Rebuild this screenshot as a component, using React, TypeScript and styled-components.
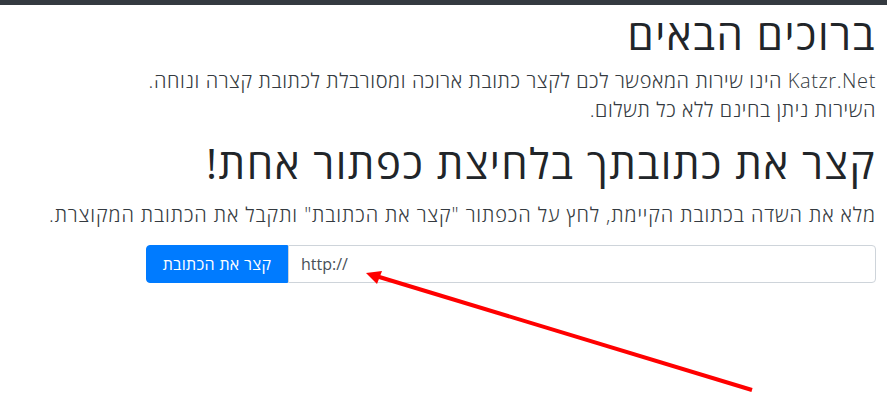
import { createGlobalStyle } from "styled-components"
import styled from "styled-components"

const GlobalStyle = createGlobalStyle`
  html, body {
    margin: 0;
    padding: 0;
    background: #fff;
  }
  body {
    font-family: "Open Sans", "DejaVu Sans", sans-serif;
    color: #212529;
  }
`

const Page = styled.div`
  position: relative;
  direction: rtl;
  min-height: 412px;
`

const TopBar = styled.div`
  height: 5px;
  background-color: #343a40;
`

const Container = styled.main`
  padding: 0 11px 0 0;
`

const Title = styled.h1<{ $top: number; $bottom: number }>`
  font-size: 42px;
  font-weight: 500;
  line-height: 1.2;
  letter-spacing: 1.5px;
  margin: ${(p) => p.$top}px 0 ${(p) => p.$bottom}px;
`

const Lead = styled.p<{ $wide?: boolean }>`
  font-size: 20px;
  font-weight: 300;
  line-height: 29px;
  letter-spacing: ${(p) => (p.$wide ? 0.9 : 0.6)}px;
  margin: 0;
  color: #343a40;
`

const InputGroup = styled.form`
  display: flex;
  width: calc(100% * 10 / 12);
  height: 38px;
  margin-top: 16px;
`

const UrlInput = styled.input`
  flex: 1;
  min-width: 0;
  direction: ltr;
  text-align: left;
  font-family: inherit;
  font-size: 16px;
  color: #495057;
  padding: 6px 12px;
  border: 1px solid #ced4da;
  border-radius: 0 4px 4px 0;
  background: #fff;

  &:focus {
    outline: none;
    border-color: #80bdff;
  }
`

const SubmitButton = styled.button`
  flex: none;
  width: 142px;
  font-family: inherit;
  font-size: 16px;
  letter-spacing: 0.3px;
  color: #fff;
  background-color: #007bff;
  border: 1px solid #007bff;
  border-radius: 4px 0 0 4px;
  cursor: pointer;
`

const Arrow = styled.svg`
  position: absolute;
  top: 0;
  left: 0;
  pointer-events: none;
`

export default function App() {
  return (
    <>
      <GlobalStyle />
      <Page>
        <TopBar />
        <Container>
          <Title $top={4} $bottom={7}>ברוכים הבאים</Title>
          <Lead>Katzr.Net הינו שירות המאפשר לכם לקצר כתובת ארוכה ומסורבלת לכתובת קצרה ונוחה.</Lead>
          <Lead>השירות ניתן בחינם ללא כל תשלום.</Lead>
          <Title $top={14} $bottom={11}>קצר את כתובתך בלחיצת כפתור אחת!</Title>
          <Lead $wide>מלא את השדה בכתובת הקיימת, לחץ על הכפתור "קצר את הכתובת" ותקבל את הכתובת המקוצרת.</Lead>
          <InputGroup onSubmit={(e) => e.preventDefault()}>
            <UrlInput type="text" defaultValue="http://" />
            <SubmitButton type="submit">קצר את הכתובת</SubmitButton>
          </InputGroup>
        </Container>
        <Arrow width="887" height="412" viewBox="0 0 887 412">
          <line x1="752" y1="390" x2="376" y2="276" stroke="#ff0000" strokeWidth="4" />
          <polygon points="366,273 382,271 377,284" fill="#ff0000" />
        </Arrow>
      </Page>
    </>
  )
}
